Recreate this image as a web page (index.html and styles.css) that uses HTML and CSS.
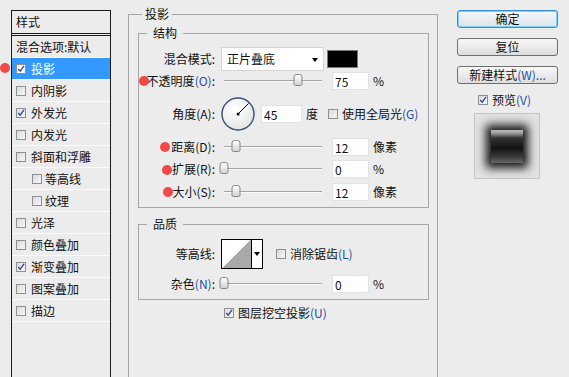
FILE: index.html
```html
<!DOCTYPE html>
<html lang="zh-CN">

<head>
    <meta charset="UTF-8">
    <meta name="viewport" content="width=device-width, initial-scale=1.0">
    <title>图层样式</title>
    <link rel="stylesheet" href="styles.css">
</head>

<body>
    <div class="dialog">
        <!-- 左侧样式列表 -->
        <aside class="style-list">
            <div class="list-head">样式</div>
            <div class="item">混合选项:默认</div>
            <div class="item active"><span class="cb on"><svg viewBox="0 0 10 10"><path d="M1.5 5 L4 7.8 L8.8 1.2"/></svg></span>投影</div>
            <div class="item"><span class="cb"></span>内阴影</div>
            <div class="item"><span class="cb on"><svg viewBox="0 0 10 10"><path d="M1.5 5 L4 7.8 L8.8 1.2"/></svg></span>外发光</div>
            <div class="item"><span class="cb"></span>内发光</div>
            <div class="item"><span class="cb"></span>斜面和浮雕</div>
            <div class="item sub"><span class="cb"></span>等高线</div>
            <div class="item sub"><span class="cb"></span>纹理</div>
            <div class="item"><span class="cb"></span>光泽</div>
            <div class="item"><span class="cb"></span>颜色叠加</div>
            <div class="item"><span class="cb on"><svg viewBox="0 0 10 10"><path d="M1.5 5 L4 7.8 L8.8 1.2"/></svg></span>渐变叠加</div>
            <div class="item"><span class="cb"></span>图案叠加</div>
            <div class="item"><span class="cb"></span>描边</div>
        </aside>

        <!-- 中间设置 -->
        <main class="settings">
            <fieldset class="group outer">
                <legend>投影</legend>

                <fieldset class="group structure">
                    <legend>结构</legend>

                    <div class="row r-mode">
                        <span class="lbl">混合模式:</span>
                        <div class="select">正片叠底<span class="arrow"></span></div>
                        <span class="swatch"></span>
                    </div>

                    <div class="row r-opacity">
                        <span class="lbl">不透明度<span class="key">(O)</span>:</span>
                        <div class="slider"><div class="track"><span class="thumb" style="left:75%"></span></div></div>
                        <span class="num">75</span>
                        <span class="unit">%</span>
                    </div>

                    <div class="row r-angle">
                        <span class="lbl">角度(A):</span>
                        <svg class="dial" viewBox="0 0 34 34">
                            <defs>
                                <radialGradient id="dialfill" cx="40%" cy="35%" r="70%">
                                    <stop offset="0" stop-color="#ffffff"/>
                                    <stop offset="1" stop-color="#e4e4e4"/>
                                </radialGradient>
                            </defs>
                            <circle cx="17" cy="17" r="16" fill="url(#dialfill)" stroke="#3e4f72" stroke-width="1.4"/>
                            <line x1="17" y1="17" x2="27.5" y2="6.5" stroke="#000" stroke-width="1"/>
                            <rect x="15.8" y="15.8" width="2.6" height="2.6" fill="#000"/>
                        </svg>
                        <span class="num wide">45</span>
                        <span class="unit">度</span>
                        <span class="cb global"></span>
                        <span class="check-text">使用全局光<span class="key">(G)</span></span>
                    </div>

                    <div class="row r-distance">
                        <span class="lbl">距离(D):</span>
                        <div class="slider"><div class="track"><span class="thumb" style="left:12%"></span></div></div>
                        <span class="num">12</span>
                        <span class="unit">像素</span>
                    </div>

                    <div class="row r-spread">
                        <span class="lbl">扩展(R):</span>
                        <div class="slider"><div class="track"><span class="thumb" style="left:0%"></span></div></div>
                        <span class="num">0</span>
                        <span class="unit">%</span>
                    </div>

                    <div class="row r-size">
                        <span class="lbl">大小(S):</span>
                        <div class="slider"><div class="track"><span class="thumb" style="left:12%"></span></div></div>
                        <span class="num">12</span>
                        <span class="unit">像素</span>
                    </div>
                </fieldset>

                <fieldset class="group quality">
                    <legend>品质</legend>

                    <div class="row r-contour">
                        <span class="lbl">等高线:</span>
                        <div class="contour"><span class="curve"></span><span class="drop"><span class="arrow"></span></span></div>
                        <span class="cb smooth"></span>
                        <span class="check-text">消除锯齿<span class="key">(L)</span></span>
                    </div>

                    <div class="row r-noise">
                        <span class="lbl">杂色<span class="key">(N)</span>:</span>
                        <div class="slider"><div class="track"><span class="thumb" style="left:0%"></span></div></div>
                        <span class="num">0</span>
                        <span class="unit">%</span>
                    </div>
                </fieldset>

                <div class="row r-knockout">
                    <span class="cb on"><svg viewBox="0 0 10 10"><path d="M1.5 5 L4 7.8 L8.8 1.2"/></svg></span>
                    <span class="check-text">图层挖空投影<span class="key">(U)</span></span>
                </div>
            </fieldset>
        </main>

        <!-- 右侧按钮 -->
        <div class="actions">
            <button class="btn primary">确定</button>
            <button class="btn">复位</button>
            <button class="btn">新建样式<span class="key">(W)...</span></button>
            <div class="preview-check">
                <span class="cb on"><svg viewBox="0 0 10 10"><path d="M1.5 5 L4 7.8 L8.8 1.2"/></svg></span>
                <span class="check-text">预览<span class="key">(V)</span></span>
            </div>
            <div class="preview">
                <span class="preview-square"></span>
            </div>
        </div>

        <!-- 标记点 -->
        <span class="dot" style="left:0px; top:63px"></span>
        <span class="dot" style="left:139px; top:76px"></span>
        <span class="dot" style="left:160px; top:142px"></span>
        <span class="dot" style="left:162px; top:165px"></span>
        <span class="dot" style="left:163px; top:187px"></span>
    </div>
</body>

</html>
```

FILE: styles.css
```css
body {
    margin: 0;
    background-color: #ececec;
    font-family: "Noto Sans CJK SC", "Noto Sans", sans-serif;
    font-size: 12px;
    line-height: 16px;
    color: #111;
}

.dialog {
    position: relative;
    display: flex;
    align-items: flex-start;
    height: 377px;
    overflow: hidden;
}

/* 左侧列表 */
.style-list {
    box-sizing: border-box;
    width: 100px;
    height: 367px;
    margin: 10px 0 0 11px;
    border: 1px solid #1a1a1a;
    border-bottom: none;
}

.list-head {
    height: 22px;
    line-height: 22px;
    padding-left: 4px;
    border-bottom: 3px double #1a1a1a;
}

.item {
    display: flex;
    align-items: center;
    gap: 5px;
    height: 21px;
    padding-left: 4px;
    border-bottom: 1px solid #fbfbfb;
}

.item.sub {
    padding-left: 20px;
    gap: 3px;
}

.item.active {
    background-color: #3399ff;
    color: #fff;
}

/* 复选框 */
.cb {
    display: inline-block;
    box-sizing: border-box;
    flex: none;
    width: 10px;
    height: 10px;
    border: 1px solid #8d8f91;
    background-image: linear-gradient(135deg, #dadada, #f7f7f7);
    position: relative;
}

.cb svg {
    position: absolute;
    left: 0;
    top: 0;
    width: 8px;
    height: 8px;
}

.cb svg path {
    fill: none;
    stroke: #2c4796;
    stroke-width: 1.6;
}

.item.active .cb {
    background: #fff;
}

.key {
    color: #1d4fa6;
}

/* 中间 */
.settings {
    margin-left: 17px;
}

.group {
    margin: 0;
    border: 1px solid #a6a6a6;
    min-width: 0;
}

.group legend {
    line-height: 16px;
}

.outer {
    box-sizing: border-box;
    width: 310px;
    height: 400px;
    margin-top: 6px;
    padding: 0 8px 0 9px;
}

.outer > legend {
    margin-left: 4px;
    padding: 0 3px;
}

.structure {
    margin-top: 3px;
    padding: 0 0 6px;
}

.quality {
    margin-top: 8px;
    padding: 0 0 6px;
}

.structure > legend,
.quality > legend {
    margin-left: 8px;
    padding: 0 6px;
}

.row {
    display: flex;
    align-items: center;
    height: 18px;
}

.lbl {
    flex: none;
    width: 76px;
    margin-right: 6px;
    text-align: right;
}

.r-mode { height: 24px; margin-top: 6px; }
.r-opacity { margin-top: 1px; }
.r-angle { height: 34px; margin-top: 7px; }
.r-distance { margin-top: 7px; }
.r-spread { margin-top: 4px; }
.r-size { margin-top: 5px; }
.r-contour { height: 30px; margin-top: 7px; }
.r-noise { margin-top: 6px; }

.r-knockout {
    height: 16px;
    margin-top: 5px;
    padding-left: 86px;
}

.select {
    box-sizing: border-box;
    position: relative;
    width: 103px;
    height: 24px;
    line-height: 22px;
    padding-left: 5px;
    background: #fff;
    border: 1px solid #d4d4d4;
}

.arrow {
    position: absolute;
    width: 0;
    height: 0;
    border-left: 3px solid transparent;
    border-right: 3px solid transparent;
    border-top: 4px solid #000;
}

.select .arrow {
    right: 5px;
    top: 10px;
}

.swatch {
    box-sizing: border-box;
    width: 31px;
    height: 18px;
    margin-left: 3px;
    background: #000;
    border: 1px solid #7a7a7a;
}

.slider {
    flex: none;
    width: 105px;
    height: 18px;
    position: relative;
}

.track {
    position: absolute;
    left: 3px;
    width: 98px;
    top: 8px;
    height: 1px;
    background: #a4a4a4;
    box-shadow: 0 1px 0 #fafafa;
}

.thumb {
    position: absolute;
    top: -6px;
    box-sizing: border-box;
    width: 9px;
    height: 12px;
    transform: translateX(-50%);
    border: 1px solid #858585;
    border-radius: 3px 3px 2px 2px;
    background-image: linear-gradient(#ffffff, #d2d2d2);
}

.num {
    box-sizing: border-box;
    width: 37px;
    height: 18px;
    line-height: 17px;
    margin-left: 6px;
    padding-left: 2px;
    background: #fff;
    border: 1px solid #e2e2e2;
}

.num.wide {
    width: 41px;
    margin-left: 6px;
}

.unit {
    margin-left: 4px;
}

.dial {
    width: 34px;
    height: 34px;
}

.cb.global {
    margin-left: 10px;
}

.check-text {
    margin-left: 4px;
}

.contour {
    box-sizing: border-box;
    display: flex;
    width: 42px;
    height: 30px;
    border: 1px solid #000;
    background: #fff;
}

.curve {
    width: 29px;
    background-image: linear-gradient(to top left, #a9a9a9 50%, #fff 50%);
}

.drop {
    position: relative;
    flex: 1;
    border-left: 1px solid #000;
}

.drop .arrow {
    left: 2px;
    top: 12px;
}

.cb.smooth {
    margin-left: 13px;
}

/* 右侧 */
.actions {
    display: flex;
    flex-direction: column;
    margin-left: 19px;
    width: 101px;
}

.btn {
    box-sizing: border-box;
    height: 18px;
    margin-top: 10px;
    padding: 0;
    font-family: inherit;
    font-size: 12px;
    line-height: 16px;
    color: #111;
    border: 1px solid #6f6f6f;
    border-radius: 3px;
    background-image: linear-gradient(#f7f7f7, #dedede);
}

.btn.primary {
    border-color: #3a8fd4;
    box-shadow: inset 0 0 0 1px #7fd0f7;
    background-image: linear-gradient(#f4f8fb, #dce4ea);
}

.preview-check {
    display: flex;
    align-items: center;
    height: 16px;
    margin-top: 8px;
    padding-left: 21px;
}

.preview {
    box-sizing: border-box;
    display: flex;
    align-items: center;
    justify-content: center;
    width: 66px;
    height: 66px;
    margin: 5px 0 0 17px;
    border: 1px solid #c4c4c4;
    background: #e2e2e2;
    overflow: hidden;
}

.preview-square {
    width: 32px;
    height: 33px;
    background-image: linear-gradient(#bdbdbd 0, #9a9a9a 10%, #333 24%, #121212 55%, #3c3c3c 82%, #686868 100%);
    box-shadow: 0 0 9px 5px rgba(0, 0, 0, .92);
}

/* 红点 */
.dot {
    position: absolute;
    width: 10px;
    height: 10px;
    border-radius: 50%;
    background: #f24848;
}
```
